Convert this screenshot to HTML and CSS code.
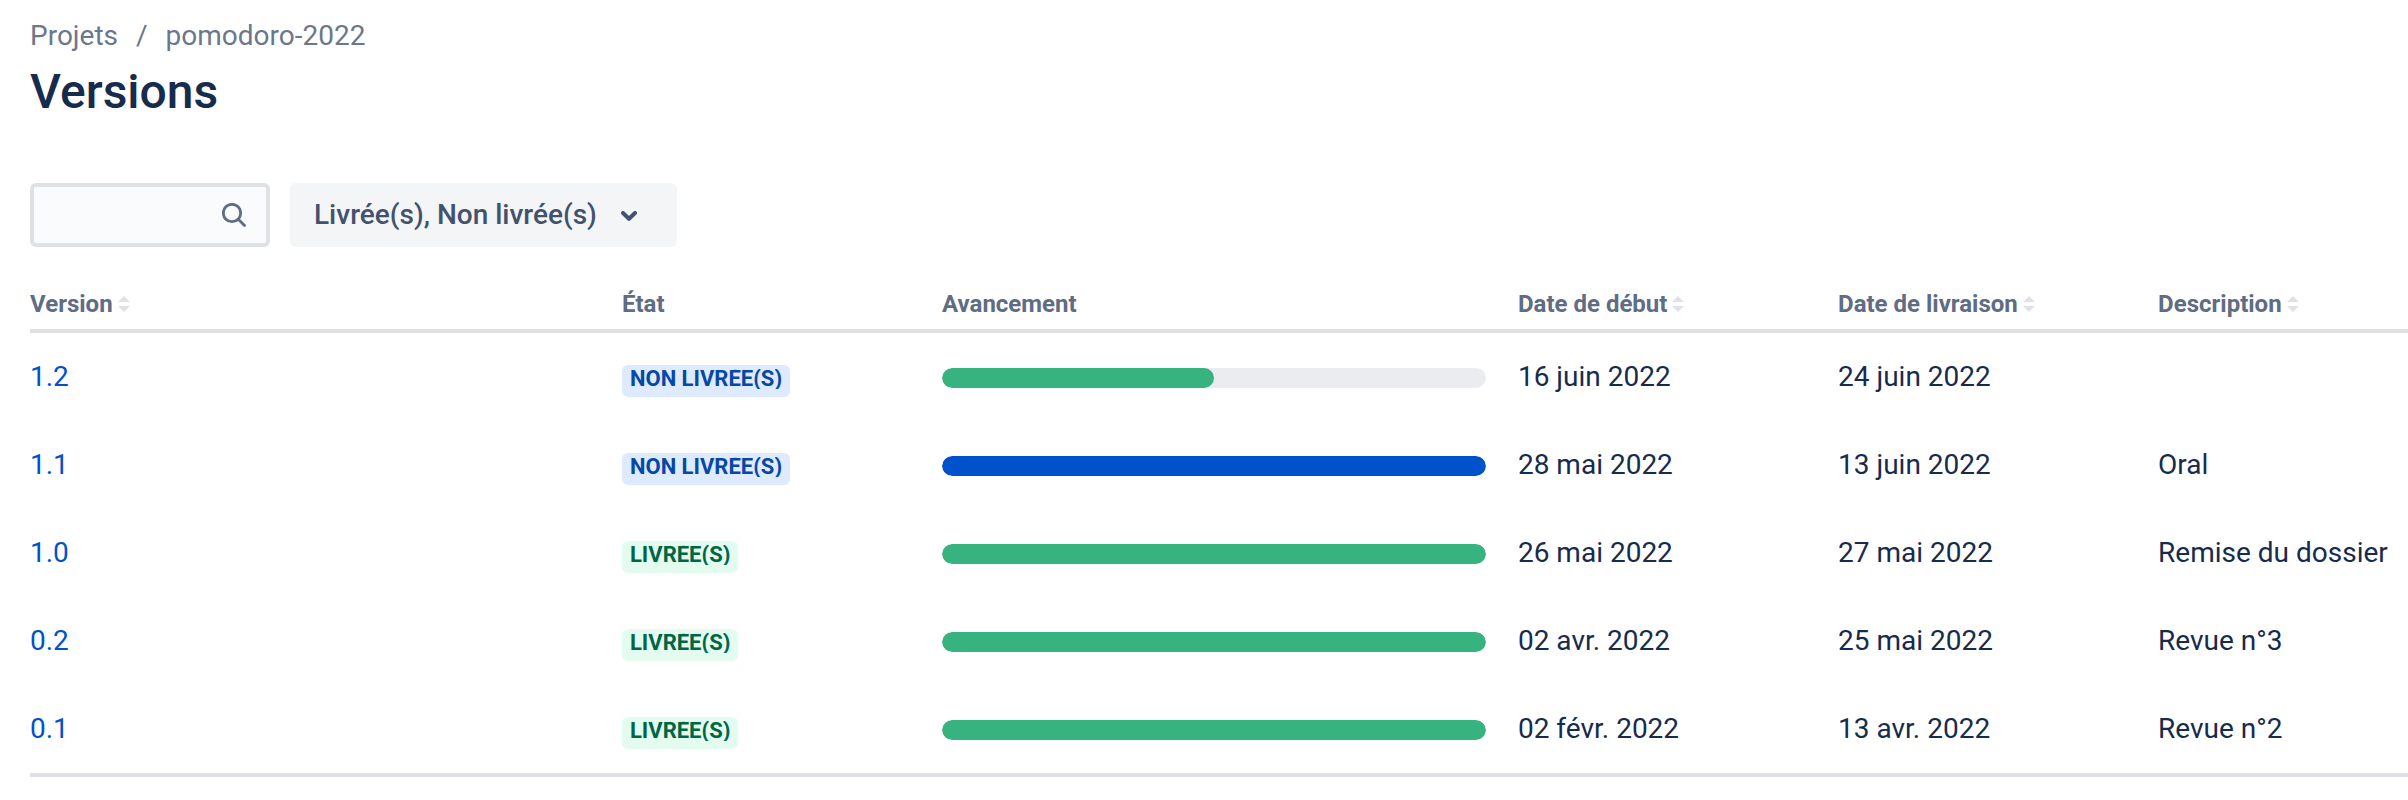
FILE: index.html
```html
<!DOCTYPE html>
<html lang="fr">
<head>
<meta charset="utf-8">
<title>Versions</title>
<link rel="stylesheet" href="styles.css">
</head>
<body>
<main class="page">
  <nav aria-label="Fil d'Ariane">
    <ol class="breadcrumbs">
      <li class="crumb"><a href="#projets">Projets</a></li>
      <li class="crumb"><a href="#pomodoro">pomodoro-2022</a></li>
    </ol>
  </nav>
  <h1 class="title">Versions</h1>

  <div class="toolbar">
    <label class="search">
      <input class="search-input" type="search" aria-label="Rechercher une version">
      <svg class="search-icon" viewBox="0 0 24 24" aria-hidden="true"><circle cx="10" cy="10" r="8.7"/><path d="M16.3 16.3 22.5 22.5"/></svg>
    </label>
    <button class="filter" type="button" aria-haspopup="listbox">
      <span>Livrée(s), Non livrée(s)</span>
      <svg class="chevron" viewBox="0 0 16 10" aria-hidden="true"><path d="M2 2 8 7.8 14 2"/></svg>
    </button>
  </div>

  <table class="versions">
    <colgroup>
      <col class="col-version"><col class="col-status"><col class="col-progress"><col class="col-date"><col class="col-date"><col>
    </colgroup>
    <thead>
      <tr>
        <th scope="col"><button class="sort" type="button">Version<svg class="sort-icon" viewBox="0 0 12 16" aria-hidden="true"><path d="M6 0 12 6H0zM0 10H12L6 16z"/></svg></button></th>
        <th scope="col">État</th>
        <th scope="col">Avancement</th>
        <th scope="col"><button class="sort" type="button">Date de début<svg class="sort-icon" viewBox="0 0 12 16" aria-hidden="true"><path d="M6 0 12 6H0zM0 10H12L6 16z"/></svg></button></th>
        <th scope="col"><button class="sort" type="button">Date de livraison<svg class="sort-icon" viewBox="0 0 12 16" aria-hidden="true"><path d="M6 0 12 6H0zM0 10H12L6 16z"/></svg></button></th>
        <th scope="col"><button class="sort" type="button">Description<svg class="sort-icon" viewBox="0 0 12 16" aria-hidden="true"><path d="M6 0 12 6H0zM0 10H12L6 16z"/></svg></button></th>
      </tr>
    </thead>
    <tbody>
      <tr>
        <td><a class="link" href="#v1.2">1.2</a></td>
        <td><span class="lozenge lozenge-open"><span class="lozenge-text">Non livrée(s)</span></span></td>
        <td><div class="bar" role="progressbar" aria-label="Avancement 1.2" aria-valuenow="50"><div class="fill fill-done" style="width:50%"></div></div></td>
        <td>16 juin 2022</td>
        <td>24 juin 2022</td>
        <td></td>
      </tr>
      <tr>
        <td><a class="link" href="#v1.1">1.1</a></td>
        <td><span class="lozenge lozenge-open"><span class="lozenge-text">Non livrée(s)</span></span></td>
        <td><div class="bar" role="progressbar" aria-label="Avancement 1.1" aria-valuenow="100"><div class="fill fill-current" style="width:100%"></div></div></td>
        <td>28 mai 2022</td>
        <td>13 juin 2022</td>
        <td>Oral</td>
      </tr>
      <tr>
        <td><a class="link" href="#v1.0">1.0</a></td>
        <td><span class="lozenge lozenge-released"><span class="lozenge-text">Livrée(s)</span></span></td>
        <td><div class="bar" role="progressbar" aria-label="Avancement 1.0" aria-valuenow="100"><div class="fill fill-done" style="width:100%"></div></div></td>
        <td>26 mai 2022</td>
        <td>27 mai 2022</td>
        <td>Remise du dossier</td>
      </tr>
      <tr>
        <td><a class="link" href="#v0.2">0.2</a></td>
        <td><span class="lozenge lozenge-released"><span class="lozenge-text">Livrée(s)</span></span></td>
        <td><div class="bar" role="progressbar" aria-label="Avancement 0.2" aria-valuenow="100"><div class="fill fill-done" style="width:100%"></div></div></td>
        <td>02 avr. 2022</td>
        <td>25 mai 2022</td>
        <td>Revue n°3</td>
      </tr>
      <tr>
        <td><a class="link" href="#v0.1">0.1</a></td>
        <td><span class="lozenge lozenge-released"><span class="lozenge-text">Livrée(s)</span></span></td>
        <td><div class="bar" role="progressbar" aria-label="Avancement 0.1" aria-valuenow="100"><div class="fill fill-done" style="width:100%"></div></div></td>
        <td>02 févr. 2022</td>
        <td>13 avr. 2022</td>
        <td>Revue n°2</td>
      </tr>
    </tbody>
  </table>
</main>
</body>
</html>
```

FILE: styles.css
```css
* {
  box-sizing: border-box;
}

body {
  margin: 0;
  background: #fff;
  color: #172b4d;
  font-family: Roboto, "Noto Sans", sans-serif;
  font-size: 28px;
  line-height: 40px;
}

.page {
  padding: 16px 0 0 30px;
}

.breadcrumbs {
  display: flex;
  margin: 0;
  padding: 0;
  list-style: none;
  color: #6b778c;
}

.crumb a {
  color: inherit;
  text-decoration: none;
}

.crumb + .crumb::before {
  content: "/";
  padding: 0 18px;
}

.title {
  margin: 8px 0 0;
  font-size: 48px;
  font-weight: 500;
  line-height: 56px;
}

.toolbar {
  display: flex;
  gap: 20px;
  margin-top: 63px;
}

.search {
  display: flex;
  align-items: center;
  width: 240px;
  height: 64px;
  padding-right: 20px;
  border: 4px solid #dfe1e6;
  border-radius: 6px;
  background: #fafbfc;
}

.search-input {
  flex: 1;
  min-width: 0;
  padding: 0 12px;
  border: 0;
  outline: 0;
  background: transparent;
  color: inherit;
  font: inherit;
}

.search-icon {
  width: 24px;
  height: 24px;
  fill: none;
  stroke: #5e6c84;
  stroke-width: 2.8;
  stroke-linecap: round;
}

.filter {
  display: flex;
  align-items: center;
  gap: 24px;
  height: 64px;
  padding: 0 40px 0 24px;
  border: 0;
  border-radius: 6px;
  background: #f4f5f7;
  color: #42526e;
  font: inherit;
  font-weight: 500;
}

.chevron {
  width: 16px;
  height: 10px;
  margin-top: 2px;
  fill: none;
  stroke: currentColor;
  stroke-width: 4;
  stroke-linecap: round;
  stroke-linejoin: round;
}

.versions {
  width: 100%;
  margin-top: 36px;
  border-collapse: separate;
  border-spacing: 0;
  border-bottom: 4px solid #dfe1e6;
  table-layout: fixed;
}

.col-version,
.col-progress {
  width: 24.22%;
}

.col-status,
.col-date {
  width: 13.46%;
}

.versions th {
  height: 50px;
  padding: 0 16px 9px;
  border-bottom: 4px solid #dfe1e6;
  color: #5e6c84;
  font-size: 24px;
  font-weight: 700;
  line-height: 32px;
  text-align: left;
  vertical-align: bottom;
}

.versions td {
  height: 88px;
  padding: 0 16px;
}

.versions th:first-child,
.versions td:first-child {
  padding-left: 0;
}

.sort {
  display: flex;
  align-items: center;
  gap: 5px;
  padding: 0;
  border: 0;
  background: none;
  color: inherit;
  font: inherit;
}

.sort-icon {
  width: 12px;
  height: 16px;
  fill: #dfe1e6;
}

.link {
  color: #0052cc;
  text-decoration: none;
}

.lozenge {
  display: inline-flex;
  padding: 4px 0 8px;
  border-radius: 6px;
  font-size: 22px;
  font-weight: 700;
  line-height: 20px;
  text-transform: uppercase;
}

.lozenge-text {
  overflow: hidden;
  padding: 0 8px;
  white-space: nowrap;
}

.lozenge-open {
  background: #deebff;
  color: #0747a6;
}

.lozenge-released {
  background: #e3fcef;
  color: #006644;
}

.bar {
  height: 20px;
  margin-top: 2px;
  overflow: hidden;
  border-radius: 10px;
  background: #ebecf0;
}

.fill {
  height: 100%;
  border-radius: 10px;
}

.fill-done {
  background: #36b37e;
}

.fill-current {
  background: #0052cc;
}
```
